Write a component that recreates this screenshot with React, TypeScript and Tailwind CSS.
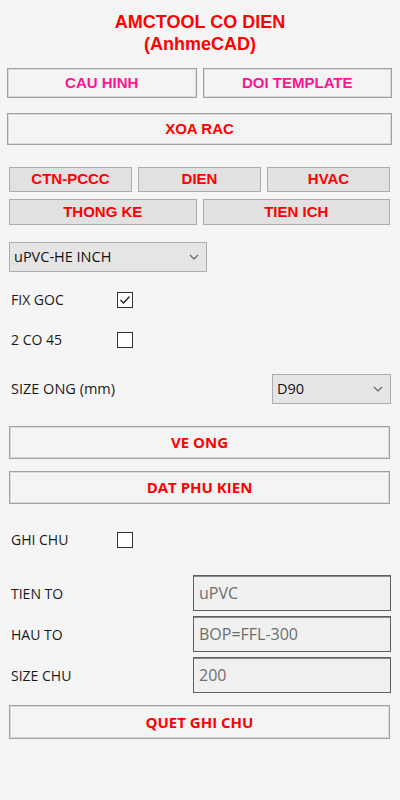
import React from "react";

// Nút kiểu phẳng sáng (viền đôi) dùng cho các lệnh chính
function PanelButton({
  label,
  color = "text-[#ff0000]",
  font = "arial",
  className = "",
}: {
  label: string;
  color?: string;
  font?: "arial" | "segoe";
  className?: string;
}) {
  return (
    <button
      type="button"
      className={
        "flex items-center justify-center border border-[#a0a0a0] bg-[#f4f4f4] shadow-[inset_1px_1px_0_#dadada,inset_-1px_-1px_0_#dadada,inset_2px_2px_0_#f8f8f8] " +
        (font === "arial"
          ? "font-['Liberation_Sans',Arial,sans-serif] text-[15px] font-bold "
          : "font-['Open_Sans','Noto_Sans',sans-serif] text-[15px] font-bold ") +
        color +
        " " +
        className
      }
    >
      {label}
    </button>
  );
}

// Nút tab xám (CTN-PCCC, DIEN…)
function TabButton({ label }: { label: string }) {
  return (
    <button
      type="button"
      className="flex h-full items-center justify-center border border-[#adadad] bg-[#e1e1e1] font-['Liberation_Sans',Arial,sans-serif] text-[15px] font-bold text-[#ff0000]"
    >
      {label}
    </button>
  );
}

function Chevron() {
  return (
    <svg width="10" height="6" viewBox="0 0 10 6" className="shrink-0">
      <path d="M1 1 L5 5 L9 1" fill="none" stroke="#606060" strokeWidth="1.1" />
    </svg>
  );
}

function Combo({ value, className = "" }: { value: string; className?: string }) {
  return (
    <div
      className={
        "flex items-center justify-between border border-[#adadad] bg-[#e5e5e5] pl-[4px] pr-[7px] text-[14.5px] text-[#111] " +
        className
      }
    >
      <span>{value}</span>
      <Chevron />
    </div>
  );
}

function CheckBox({ checked = false }: { checked?: boolean }) {
  return (
    <div className="flex h-[16px] w-[16px] items-center justify-center border border-[#333] bg-white">
      {checked && (
        <svg width="12" height="10" viewBox="0 0 12 10">
          <path d="M1.5 5 L4.5 8 L10.5 1.5" fill="none" stroke="#222" strokeWidth="1.3" />
        </svg>
      )}
    </div>
  );
}

function CheckRow({ label, checked, className = "" }: { label: string; checked?: boolean; className?: string }) {
  return (
    <div className={"flex h-[16px] items-center " + className}>
      <span className="w-[117px] pl-[11px] leading-none">{label}</span>
      <CheckBox checked={checked} />
    </div>
  );
}

function FieldRow({ label, value, className = "" }: { label: string; value: string; className?: string }) {
  return (
    <div className={"flex h-[36px] items-center pl-[11px] pr-[9px] " + className}>
      <span className="flex-1">{label}</span>
      <div className="flex h-full w-[198px] items-center border border-[#5f5f5f] bg-[#f0f0f0] pl-[5px] text-[16px] text-[#6e6e6e] shadow-[inset_0_1px_0_#8a8a8a]">
        {value}
      </div>
    </div>
  );
}

export default function App() {
  return (
    <div className="min-h-[800px] bg-[#f5f5f5] pt-[11px] font-['Open_Sans','Noto_Sans',sans-serif] text-[14px] text-[#1a1a1a]">
      <div className="text-center font-['Liberation_Sans',Arial,sans-serif] text-[18px] font-bold leading-[22px] text-[#ff0000]">
        <div>AMCTOOL CO DIEN</div>
        <div>(AnhmeCAD)</div>
      </div>

      <div className="mt-[13px] grid h-[30px] grid-cols-2 gap-[6px] pl-[7px] pr-[8px]">
        <PanelButton label="CAU HINH" color="text-[#ff1493]" />
        <PanelButton label="DOI TEMPLATE" color="text-[#ff1493]" />
      </div>

      <div className="mt-[15px] pl-[7px] pr-[8px]">
        <PanelButton label="XOA RAC" className="h-[32px] w-full" />
      </div>

      <div className="mt-[22px] grid h-[25px] grid-cols-3 gap-[6px] pl-[9px] pr-[10px]">
        <TabButton label="CTN-PCCC" />
        <TabButton label="DIEN" />
        <TabButton label="HVAC" />
      </div>
      <div className="mt-[7px] grid h-[26px] grid-cols-2 gap-[6px] pl-[9px] pr-[10px]">
        <TabButton label="THONG KE" />
        <TabButton label="TIEN ICH" />
      </div>

      <Combo value="uPVC-HE INCH" className="ml-[9px] mt-[17px] h-[30px] w-[198px]" />

      <CheckRow label="FIX GOC" checked className="mt-[20px]" />
      <CheckRow label="2 CO 45" className="mt-[24px]" />

      <div className="mt-[26px] flex h-[30px] items-center pl-[11px] pr-[9px]">
        <span className="flex-1 text-[14.5px]">SIZE ONG (mm)</span>
        <Combo value="D90" className="h-full w-[119px]" />
      </div>

      <div className="mt-[22px] flex flex-col gap-[12px] pl-[9px] pr-[10px]">
        <PanelButton label="VE ONG" font="segoe" className="h-[33px] w-full" />
        <PanelButton label="DAT PHU KIEN" font="segoe" className="h-[33px] w-full" />
      </div>

      <CheckRow label="GHI CHU" className="mt-[28px]" />

      <FieldRow label="TIEN TO" value="uPVC" className="mt-[27px]" />
      <FieldRow label="HAU TO" value="BOP=FFL-300" className="mt-[5px]" />
      <FieldRow label="SIZE CHU" value="200" className="mt-[5px]" />

      <div className="mt-[12px] pl-[9px] pr-[10px]">
        <PanelButton label="QUET GHI CHU" font="segoe" className="h-[34px] w-full" />
      </div>
    </div>
  );
}
